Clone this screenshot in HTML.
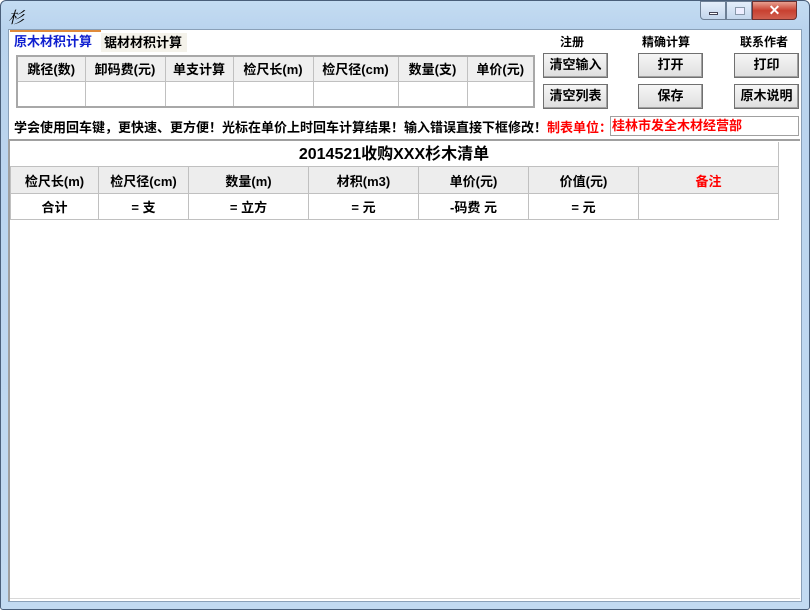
<!DOCTYPE html><html><head><meta charset="utf-8"><style>
*{margin:0;padding:0;box-sizing:border-box}
body{width:810px;height:610px;position:relative;overflow:hidden;background:#fff;font-family:"Liberation Sans","Noto Sans CJK SC",sans-serif;font-size:12px;font-weight:bold;color:#000}
.a{position:absolute}
.frame{left:0;top:0;width:810px;height:610px;background:linear-gradient(#c4dcf2,#b9d3ee 30px,#c2daf1);border:1px solid #4a5f7a;border-radius:6px 6px 3px 3px}
.client{left:8px;top:29px;width:794px;height:573px;background:#fff;border:1px solid #8aa0b8}
.btn{background:linear-gradient(#f6f6f6,#dedede);border:1px solid #707070;text-align:center;line-height:22px;font-size:13px;box-shadow:inset -1px -1px 0 #a0a0a0}
table{border-collapse:collapse;position:absolute}
td{border:1px solid #c0c0c0;text-align:center;padding:0;white-space:nowrap}
</style></head><body>
<div class="a frame"></div>
<div class="a" style="left:8px;top:5px;font-size:16px;font-family:'Noto Serif CJK SC',serif;font-weight:normal;font-style:italic">杉</div>
<div class="a" style="left:700px;top:1px;width:26px;height:19px;border:1px solid #6d7f95;border-radius:0 0 0 4px;background:linear-gradient(#e4eefa,#c3d6ec)"><div class="a" style="left:8px;top:10px;width:9px;height:3px;background:#fff;border:1px solid #445"></div></div>
<div class="a" style="left:726px;top:1px;width:26px;height:19px;border:1px solid #6d7f95;background:linear-gradient(#e4eefa,#c3d6ec)"><div class="a" style="left:8px;top:5px;width:10px;height:8px;border:1px solid #8898aa;background:#eef"></div></div>
<div class="a" style="left:752px;top:1px;width:45px;height:19px;border:1px solid #6d3030;border-radius:0 0 4px 0;background:linear-gradient(#e8a090,#c84030 50%,#d06050);color:#fff;text-align:center;line-height:17px;font-size:14px">✕</div>
<div class="a client"></div>
<div class="a" style="left:10px;top:30px;width:91px;height:22px;border-top:2px solid #e08a3a;background:#fff;color:#1020d0;font-size:13px;padding-left:4px;line-height:20px">原木材积计算</div>
<div class="a" style="left:101px;top:33px;width:86px;height:19px;background:#f4f2ea;font-size:13px;padding-left:3px;line-height:19px">锯材材积计算</div>
<table style="left:16px;top:55px;width:519px;height:53px;border:2px solid #a8a8a8;font-size:13px">
<tr style="height:25px;background:#efefef"><td style="width:68px">跳径(数)</td><td style="width:80px">卸码费(元)</td><td style="width:68px">单支计算</td><td style="width:80px">检尺长(m)</td><td style="width:85px">检尺径(cm)</td><td style="width:69px">数量(支)</td><td>单价(元)</td></tr>
<tr style="height:26px"><td></td><td></td><td></td><td></td><td></td><td></td><td></td></tr></table>
<div class="a" style="left:560px;top:33px;font-size:12px">注册</div>
<div class="a" style="left:642px;top:33px;font-size:12px">精确计算</div>
<div class="a" style="left:740px;top:33px;font-size:12px">联系作者</div>
<div class="a btn" style="left:543px;top:53px;width:65px;height:25px">清空输入</div>
<div class="a btn" style="left:638px;top:53px;width:65px;height:25px">打开</div>
<div class="a btn" style="left:734px;top:53px;width:65px;height:25px">打印</div>
<div class="a btn" style="left:543px;top:84px;width:65px;height:25px">清空列表</div>
<div class="a btn" style="left:638px;top:84px;width:65px;height:25px">保存</div>
<div class="a btn" style="left:734px;top:84px;width:65px;height:25px">原木说明</div>
<div class="a" style="left:14px;top:117px;font-size:13px;white-space:nowrap">学会使用回车键，更快速、更方便！光标在单价上时回车计算结果！输入错误直接下框修改！<span style="color:#f00">制表单位：</span></div>
<div class="a" style="left:610px;top:116px;width:189px;height:20px;border:1px solid #a0a0a0;color:#f00;font-size:13px;line-height:18px;padding-left:1px">桂林市发全木材经营部</div>
<div class="a" style="left:8px;top:139px;width:792px;height:2px;background:#a0a0a0"></div>
<div class="a" style="left:8px;top:139px;width:2px;height:462px;background:#a0a0a0"></div>
<div class="a" style="left:10px;top:142px;width:769px;height:24px;border-right:1px solid #c0c0c0;text-align:center;font-size:16px;line-height:26px">2014521收购XXX杉木清单</div>
<table style="left:10px;top:166px;width:769px;font-size:13px">
<tr style="height:27px;background:#ededed"><td style="width:88px">检尺长(m)</td><td style="width:90px">检尺径(cm)</td><td style="width:120px">数量(m)</td><td style="width:110px">材积(m3)</td><td style="width:110px">单价(元)</td><td style="width:110px">价值(元)</td><td style="color:#f00">备注</td></tr>
<tr style="height:26px"><td>合计</td><td>= 支</td><td>= 立方</td><td>= 元</td><td>-码费 元</td><td>= 元</td><td></td></tr></table>
<div class="a" style="left:10px;top:598px;width:790px;height:1px;background:#d8d8d8"></div>
</body></html>
